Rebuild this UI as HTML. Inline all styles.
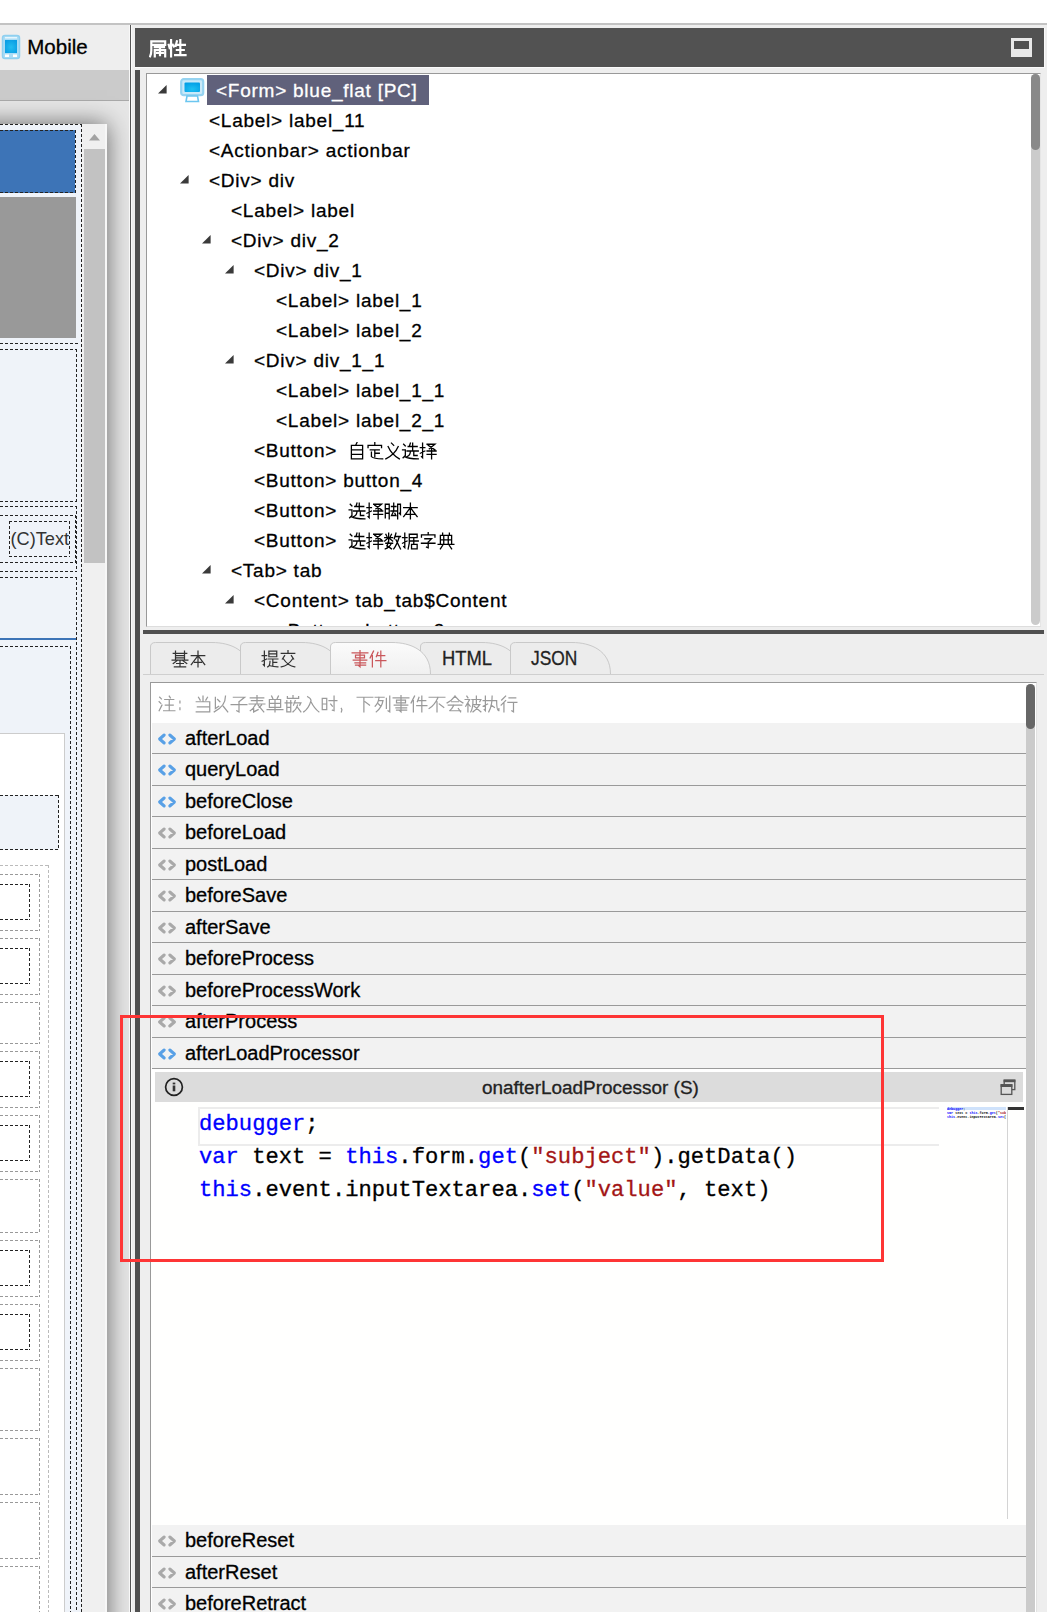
<!DOCTYPE html><html><head><meta charset="utf-8"><title>form designer</title><style>
*{margin:0;padding:0;box-sizing:border-box}
html,body{width:1047px;height:1612px;overflow:hidden;background:#fff}
body{position:relative;font-family:"Liberation Sans",sans-serif;color:#000}
.a{position:absolute}
.t{position:absolute;white-space:nowrap}
.cj{letter-spacing:3px}
.t{-webkit-text-stroke:0.3px currentColor}
</style></head><body>
<div class="a" style="left:0px;top:23px;width:1047px;height:2px;background:#c3c3c3"></div>
<div class="a" style="left:0;top:0;width:129px;height:1612px;overflow:hidden">
<div class="a" style="left:0px;top:25px;width:129px;height:45px;background:#eeeeee"></div>
<svg class="a" style="left:1px;top:34px" width="20" height="26" viewBox="0 0 20 26"><rect x="1.5" y="1.5" width="17" height="23" rx="2.5" fill="#aadcf5" stroke="#8fd0f0" stroke-width="1.5"/><defs><radialGradient id="mg" cx=".5" cy=".55" r=".6"><stop offset="0" stop-color="#22bdf0"/><stop offset="1" stop-color="#0a9ee4"/></radialGradient></defs><rect x="4" y="6" width="12" height="13" fill="url(#mg)"/><rect x="4" y="20.5" width="4" height="2.5" fill="#fff"/><rect x="12" y="20.5" width="4" height="2.5" fill="#fff"/><rect x="4" y="3" width="12" height="1.5" fill="#e6f6fd"/></svg>
<div class="t" style="left:27.3px;top:37px;font-size:20.5px;line-height:20px;color:#000">Mobile</div>
<div class="a" style="left:0px;top:70px;width:129px;height:30px;background:#cbcbcb"></div>
<div class="a" style="left:0px;top:100px;width:129px;height:1px;background:#a9a9a9"></div>
<div class="a" style="left:0px;top:101px;width:129px;height:1511px;background:#e6e6e6"></div>
<div class="a" style="left:-30px;top:124px;width:137px;height:1600px;background:#f0f0f0;box-shadow:0 0 23px rgba(0,0,0,.56)"></div>
<svg class="a" style="left:88px;top:133px" width="13" height="8"><path d="M1 7.5 L6.5 1 L12 7.5Z" fill="#a3a3a3"/></svg>
<div class="a" style="left:84px;top:149px;width:21px;height:414px;background:#c2c2c2"></div>
<div class="a" style="left:105px;top:124px;width:2px;height:1500px;background:#f7f7f7"></div>
<div class="a" style="left:-30px;top:125px;width:111px;height:1600px;background:#eff3f9"></div>
<div class="a" style="left:0px;top:124px;width:82px;height:1px;background:repeating-linear-gradient(90deg,#222 0 3px,transparent 3px 5px)"></div>
<div class="a" style="left:81px;top:124px;width:1px;height:1489px;background:repeating-linear-gradient(180deg,#222 0 3px,transparent 3px 5px)"></div>
<div class="a" style="left:-30px;top:130px;width:105px;height:63px;background:#3d74b7"></div>
<div class="a" style="left:-5px;top:130px;width:81px;height:1px;background:repeating-linear-gradient(90deg,#222 0 3px,transparent 3px 5px)"></div><div class="a" style="left:75px;top:130px;width:1px;height:63px;background:repeating-linear-gradient(180deg,#222 0 3px,transparent 3px 5px)"></div><div class="a" style="left:-5px;top:192px;width:81px;height:1px;background:repeating-linear-gradient(90deg,#222 0 3px,transparent 3px 5px)"></div>
<div class="a" style="left:-30px;top:197px;width:106px;height:141px;background:#999999"></div>
<div class="a" style="left:0px;top:343px;width:78px;height:1px;background:repeating-linear-gradient(90deg,#222 0 3px,transparent 3px 5px)"></div>
<div class="a" style="left:-5px;top:349px;width:82px;height:1px;background:repeating-linear-gradient(90deg,#222 0 3px,transparent 3px 5px)"></div><div class="a" style="left:76px;top:349px;width:1px;height:153px;background:repeating-linear-gradient(180deg,#222 0 3px,transparent 3px 5px)"></div><div class="a" style="left:-5px;top:501px;width:82px;height:1px;background:repeating-linear-gradient(90deg,#222 0 3px,transparent 3px 5px)"></div>
<div class="a" style="left:-5px;top:506px;width:82px;height:1px;background:repeating-linear-gradient(90deg,#222 0 3px,transparent 3px 5px)"></div><div class="a" style="left:76px;top:506px;width:1px;height:66px;background:repeating-linear-gradient(180deg,#222 0 3px,transparent 3px 5px)"></div><div class="a" style="left:-5px;top:571px;width:82px;height:1px;background:repeating-linear-gradient(90deg,#222 0 3px,transparent 3px 5px)"></div>
<div class="a" style="left:-5px;top:515px;width:81px;height:1px;background:repeating-linear-gradient(90deg,#222 0 3px,transparent 3px 5px)"></div><div class="a" style="left:75px;top:515px;width:1px;height:48px;background:repeating-linear-gradient(180deg,#222 0 3px,transparent 3px 5px)"></div><div class="a" style="left:-5px;top:562px;width:81px;height:1px;background:repeating-linear-gradient(90deg,#222 0 3px,transparent 3px 5px)"></div>
<div class="a" style="left:9px;top:521px;width:61px;height:1px;background:repeating-linear-gradient(90deg,#222 0 3px,transparent 3px 5px)"></div><div class="a" style="left:69px;top:521px;width:1px;height:36px;background:repeating-linear-gradient(180deg,#222 0 3px,transparent 3px 5px)"></div><div class="a" style="left:9px;top:556px;width:61px;height:1px;background:repeating-linear-gradient(90deg,#222 0 3px,transparent 3px 5px)"></div><div class="a" style="left:9px;top:521px;width:1px;height:36px;background:repeating-linear-gradient(180deg,#222 0 3px,transparent 3px 5px)"></div>
<div class="t" style="left:10.5px;top:529px;font-size:18.2px;line-height:20px;color:#333;-webkit-text-stroke:0">(C)Text</div>
<div class="a" style="left:0px;top:577px;width:77px;height:1px;background:repeating-linear-gradient(90deg,#222 0 3px,transparent 3px 5px)"></div>
<div class="a" style="left:76px;top:577px;width:1px;height:1036px;background:repeating-linear-gradient(180deg,#222 0 3px,transparent 3px 5px)"></div>
<div class="a" style="left:0px;top:638px;width:76px;height:2px;background:#3d74b7"></div>
<div class="a" style="left:0px;top:646px;width:71px;height:1px;background:repeating-linear-gradient(90deg,#222 0 3px,transparent 3px 5px)"></div>
<div class="a" style="left:70px;top:646px;width:1px;height:967px;background:repeating-linear-gradient(180deg,#222 0 3px,transparent 3px 5px)"></div>
<div class="a" style="left:-5px;top:733px;width:70px;height:1000px;background:#fff;border-top:1px solid #ccc;border-right:1px solid #ccc"></div>
<div class="a" style="left:-5px;top:795px;width:64px;height:55px;background:#eff3f9"></div>
<div class="a" style="left:-5px;top:795px;width:64px;height:1px;background:repeating-linear-gradient(90deg,#222 0 3px,transparent 3px 5px)"></div><div class="a" style="left:58px;top:795px;width:1px;height:55px;background:repeating-linear-gradient(180deg,#222 0 3px,transparent 3px 5px)"></div><div class="a" style="left:-5px;top:849px;width:64px;height:1px;background:repeating-linear-gradient(90deg,#222 0 3px,transparent 3px 5px)"></div>
<div class="a" style="left:0px;top:865px;width:49px;height:1px;background:repeating-linear-gradient(90deg,#bbb 0 3px,transparent 3px 5px)"></div>
<div class="a" style="left:48px;top:865px;width:1px;height:748px;background:repeating-linear-gradient(180deg,#bbb 0 3px,transparent 3px 5px)"></div>
<div class="a" style="left:-5px;top:874px;width:45px;height:1px;background:repeating-linear-gradient(90deg,#999 0 3px,transparent 3px 5px)"></div><div class="a" style="left:39px;top:874px;width:1px;height:57px;background:repeating-linear-gradient(180deg,#999 0 3px,transparent 3px 5px)"></div><div class="a" style="left:-5px;top:930px;width:45px;height:1px;background:repeating-linear-gradient(90deg,#999 0 3px,transparent 3px 5px)"></div>
<div class="a" style="left:-5px;top:938px;width:45px;height:1px;background:repeating-linear-gradient(90deg,#999 0 3px,transparent 3px 5px)"></div><div class="a" style="left:39px;top:938px;width:1px;height:57px;background:repeating-linear-gradient(180deg,#999 0 3px,transparent 3px 5px)"></div><div class="a" style="left:-5px;top:994px;width:45px;height:1px;background:repeating-linear-gradient(90deg,#999 0 3px,transparent 3px 5px)"></div>
<div class="a" style="left:-5px;top:1002px;width:45px;height:1px;background:repeating-linear-gradient(90deg,#999 0 3px,transparent 3px 5px)"></div><div class="a" style="left:39px;top:1002px;width:1px;height:42px;background:repeating-linear-gradient(180deg,#999 0 3px,transparent 3px 5px)"></div><div class="a" style="left:-5px;top:1043px;width:45px;height:1px;background:repeating-linear-gradient(90deg,#999 0 3px,transparent 3px 5px)"></div>
<div class="a" style="left:-5px;top:1051px;width:45px;height:1px;background:repeating-linear-gradient(90deg,#999 0 3px,transparent 3px 5px)"></div><div class="a" style="left:39px;top:1051px;width:1px;height:57px;background:repeating-linear-gradient(180deg,#999 0 3px,transparent 3px 5px)"></div><div class="a" style="left:-5px;top:1107px;width:45px;height:1px;background:repeating-linear-gradient(90deg,#999 0 3px,transparent 3px 5px)"></div>
<div class="a" style="left:-5px;top:1115px;width:45px;height:1px;background:repeating-linear-gradient(90deg,#999 0 3px,transparent 3px 5px)"></div><div class="a" style="left:39px;top:1115px;width:1px;height:57px;background:repeating-linear-gradient(180deg,#999 0 3px,transparent 3px 5px)"></div><div class="a" style="left:-5px;top:1171px;width:45px;height:1px;background:repeating-linear-gradient(90deg,#999 0 3px,transparent 3px 5px)"></div>
<div class="a" style="left:-5px;top:1179px;width:45px;height:1px;background:repeating-linear-gradient(90deg,#999 0 3px,transparent 3px 5px)"></div><div class="a" style="left:39px;top:1179px;width:1px;height:54px;background:repeating-linear-gradient(180deg,#999 0 3px,transparent 3px 5px)"></div><div class="a" style="left:-5px;top:1232px;width:45px;height:1px;background:repeating-linear-gradient(90deg,#999 0 3px,transparent 3px 5px)"></div>
<div class="a" style="left:-5px;top:1240px;width:45px;height:1px;background:repeating-linear-gradient(90deg,#999 0 3px,transparent 3px 5px)"></div><div class="a" style="left:39px;top:1240px;width:1px;height:57px;background:repeating-linear-gradient(180deg,#999 0 3px,transparent 3px 5px)"></div><div class="a" style="left:-5px;top:1296px;width:45px;height:1px;background:repeating-linear-gradient(90deg,#999 0 3px,transparent 3px 5px)"></div>
<div class="a" style="left:-5px;top:1304px;width:45px;height:1px;background:repeating-linear-gradient(90deg,#999 0 3px,transparent 3px 5px)"></div><div class="a" style="left:39px;top:1304px;width:1px;height:57px;background:repeating-linear-gradient(180deg,#999 0 3px,transparent 3px 5px)"></div><div class="a" style="left:-5px;top:1360px;width:45px;height:1px;background:repeating-linear-gradient(90deg,#999 0 3px,transparent 3px 5px)"></div>
<div class="a" style="left:-5px;top:1368px;width:45px;height:1px;background:repeating-linear-gradient(90deg,#999 0 3px,transparent 3px 5px)"></div><div class="a" style="left:39px;top:1368px;width:1px;height:63px;background:repeating-linear-gradient(180deg,#999 0 3px,transparent 3px 5px)"></div><div class="a" style="left:-5px;top:1430px;width:45px;height:1px;background:repeating-linear-gradient(90deg,#999 0 3px,transparent 3px 5px)"></div>
<div class="a" style="left:-5px;top:1438px;width:45px;height:1px;background:repeating-linear-gradient(90deg,#999 0 3px,transparent 3px 5px)"></div><div class="a" style="left:39px;top:1438px;width:1px;height:57px;background:repeating-linear-gradient(180deg,#999 0 3px,transparent 3px 5px)"></div><div class="a" style="left:-5px;top:1494px;width:45px;height:1px;background:repeating-linear-gradient(90deg,#999 0 3px,transparent 3px 5px)"></div>
<div class="a" style="left:-5px;top:1502px;width:45px;height:1px;background:repeating-linear-gradient(90deg,#999 0 3px,transparent 3px 5px)"></div><div class="a" style="left:39px;top:1502px;width:1px;height:57px;background:repeating-linear-gradient(180deg,#999 0 3px,transparent 3px 5px)"></div><div class="a" style="left:-5px;top:1558px;width:45px;height:1px;background:repeating-linear-gradient(90deg,#999 0 3px,transparent 3px 5px)"></div>
<div class="a" style="left:-5px;top:1566px;width:45px;height:1px;background:repeating-linear-gradient(90deg,#999 0 3px,transparent 3px 5px)"></div><div class="a" style="left:39px;top:1566px;width:1px;height:57px;background:repeating-linear-gradient(180deg,#999 0 3px,transparent 3px 5px)"></div><div class="a" style="left:-5px;top:1622px;width:45px;height:1px;background:repeating-linear-gradient(90deg,#999 0 3px,transparent 3px 5px)"></div>
<div class="a" style="left:-5px;top:884px;width:35px;height:1px;background:repeating-linear-gradient(90deg,#222 0 3px,transparent 3px 5px)"></div><div class="a" style="left:29px;top:884px;width:1px;height:36px;background:repeating-linear-gradient(180deg,#222 0 3px,transparent 3px 5px)"></div><div class="a" style="left:-5px;top:919px;width:35px;height:1px;background:repeating-linear-gradient(90deg,#222 0 3px,transparent 3px 5px)"></div>
<div class="a" style="left:-5px;top:948px;width:35px;height:1px;background:repeating-linear-gradient(90deg,#222 0 3px,transparent 3px 5px)"></div><div class="a" style="left:29px;top:948px;width:1px;height:36px;background:repeating-linear-gradient(180deg,#222 0 3px,transparent 3px 5px)"></div><div class="a" style="left:-5px;top:983px;width:35px;height:1px;background:repeating-linear-gradient(90deg,#222 0 3px,transparent 3px 5px)"></div>
<div class="a" style="left:-5px;top:1061px;width:35px;height:1px;background:repeating-linear-gradient(90deg,#222 0 3px,transparent 3px 5px)"></div><div class="a" style="left:29px;top:1061px;width:1px;height:36px;background:repeating-linear-gradient(180deg,#222 0 3px,transparent 3px 5px)"></div><div class="a" style="left:-5px;top:1096px;width:35px;height:1px;background:repeating-linear-gradient(90deg,#222 0 3px,transparent 3px 5px)"></div>
<div class="a" style="left:-5px;top:1125px;width:35px;height:1px;background:repeating-linear-gradient(90deg,#222 0 3px,transparent 3px 5px)"></div><div class="a" style="left:29px;top:1125px;width:1px;height:36px;background:repeating-linear-gradient(180deg,#222 0 3px,transparent 3px 5px)"></div><div class="a" style="left:-5px;top:1160px;width:35px;height:1px;background:repeating-linear-gradient(90deg,#222 0 3px,transparent 3px 5px)"></div>
<div class="a" style="left:-5px;top:1250px;width:35px;height:1px;background:repeating-linear-gradient(90deg,#222 0 3px,transparent 3px 5px)"></div><div class="a" style="left:29px;top:1250px;width:1px;height:36px;background:repeating-linear-gradient(180deg,#222 0 3px,transparent 3px 5px)"></div><div class="a" style="left:-5px;top:1285px;width:35px;height:1px;background:repeating-linear-gradient(90deg,#222 0 3px,transparent 3px 5px)"></div>
<div class="a" style="left:-5px;top:1314px;width:35px;height:1px;background:repeating-linear-gradient(90deg,#222 0 3px,transparent 3px 5px)"></div><div class="a" style="left:29px;top:1314px;width:1px;height:36px;background:repeating-linear-gradient(180deg,#222 0 3px,transparent 3px 5px)"></div><div class="a" style="left:-5px;top:1349px;width:35px;height:1px;background:repeating-linear-gradient(90deg,#222 0 3px,transparent 3px 5px)"></div>
</div>
<div class="a" style="left:129px;top:25px;width:1px;height:1587px;background:#f8f8f8"></div>
<div class="a" style="left:130px;top:25px;width:1px;height:1587px;background:#555"></div>
<div class="a" style="left:131px;top:25px;width:916px;height:1587px;background:#eeeeee"></div>
<div class="a" style="left:131px;top:25px;width:1px;height:1587px;background:#fafafa"></div>
<div class="a" style="left:135px;top:28px;width:910px;height:40px;background:#fafafa"></div>
<div class="a" style="left:135px;top:28px;width:909px;height:39px;background:#525252"></div>
<svg class="a" style="left:149px;top:38.5px" width="39" height="20" viewBox="0 0 33.730 17.297"><g fill="none" stroke="#fff" stroke-width="1.9" stroke-linecap="square" stroke-linejoin="miter"><path transform="translate(0.00 0)" d="M2 2H14V5H2 M2 2V10Q2 13 1 15 M5 7H13 M5 9.5H14V15 M5 9.5V15 M9.5 7V14 M7 12H12"/><path transform="translate(16.09 0)" d="M3 1V15 M1 5L1.8 8 M4.5 5L5.5 6.5 M8 2L7 6 M7 5H15 M11 1V14 M8 9.5H14 M6.5 14H15.5"/></g></svg>
<svg class="a" style="left:1011px;top:38px" width="21" height="19"><rect x="0" y="0" width="21" height="19" fill="#e8e8e8"/><rect x="3" y="3" width="15" height="8" fill="#505050"/></svg>
<div class="a" style="left:135px;top:70px;width:5px;height:1542px;background:#505050"></div>
<div class="a" style="left:146px;top:73px;width:895px;height:554px;background:#fff;border-top:1px solid #999;border-left:1px solid #999;border-bottom:1px solid #ddd;border-right:1px solid #e6e6e6;overflow:hidden">
<svg class="a" style="left:11px;top:11px" width="10" height="10"><path d="M0 8.6 L8.6 0 L8.6 8.6Z" fill="#3a3a3a"/></svg>
<div class="a" style="left:60px;top:1px;width:222px;height:30px;background:#60617b"></div>
<svg class="a" style="left:33px;top:4px" width="25" height="25" viewBox="0 0 25 25"><rect x="1.2" y="1.2" width="22" height="16" rx="2.5" fill="#c9e9f9" stroke="#95d3f1" stroke-width="2.2"/><defs><radialGradient id="sg" cx=".5" cy=".7" r=".7"><stop offset="0" stop-color="#1ec0f2"/><stop offset="1" stop-color="#02a0e6"/></radialGradient></defs><rect x="4.5" y="4.5" width="15.5" height="9.5" rx="1" fill="url(#sg)"/><path d="M7 18 L17.5 18 L18.5 23.5 L6 23.5Z" fill="#fff" stroke="#6cc6f0" stroke-width="1.6"/></svg>
<div class="t" style="left:69px;top:2px;font-size:19px;line-height:30px;letter-spacing:0.75px;color:#fff">&lt;Form&gt; blue_flat [PC]</div>
<div class="t" style="left:62px;top:32px;font-size:19px;line-height:30px;letter-spacing:0.75px;color:#000">&lt;Label&gt; label_11</div>
<div class="t" style="left:62px;top:62px;font-size:19px;line-height:30px;letter-spacing:0.75px;color:#000">&lt;Actionbar&gt; actionbar</div>
<svg class="a" style="left:33px;top:101px" width="10" height="10"><path d="M0 8.6 L8.6 0 L8.6 8.6Z" fill="#3a3a3a"/></svg>
<div class="t" style="left:62px;top:92px;font-size:19px;line-height:30px;letter-spacing:0.75px;color:#000">&lt;Div&gt; div</div>
<div class="t" style="left:84px;top:122px;font-size:19px;line-height:30px;letter-spacing:0.75px;color:#000">&lt;Label&gt; label</div>
<svg class="a" style="left:55px;top:161px" width="10" height="10"><path d="M0 8.6 L8.6 0 L8.6 8.6Z" fill="#3a3a3a"/></svg>
<div class="t" style="left:84px;top:152px;font-size:19px;line-height:30px;letter-spacing:0.75px;color:#000">&lt;Div&gt; div_2</div>
<svg class="a" style="left:78px;top:191px" width="10" height="10"><path d="M0 8.6 L8.6 0 L8.6 8.6Z" fill="#3a3a3a"/></svg>
<div class="t" style="left:107px;top:182px;font-size:19px;line-height:30px;letter-spacing:0.75px;color:#000">&lt;Div&gt; div_1</div>
<div class="t" style="left:129px;top:212px;font-size:19px;line-height:30px;letter-spacing:0.75px;color:#000">&lt;Label&gt; label_1</div>
<div class="t" style="left:129px;top:242px;font-size:19px;line-height:30px;letter-spacing:0.75px;color:#000">&lt;Label&gt; label_2</div>
<svg class="a" style="left:78px;top:281px" width="10" height="10"><path d="M0 8.6 L8.6 0 L8.6 8.6Z" fill="#3a3a3a"/></svg>
<div class="t" style="left:107px;top:272px;font-size:19px;line-height:30px;letter-spacing:0.75px;color:#000">&lt;Div&gt; div_1_1</div>
<div class="t" style="left:129px;top:302px;font-size:19px;line-height:30px;letter-spacing:0.75px;color:#000">&lt;Label&gt; label_1_1</div>
<div class="t" style="left:129px;top:332px;font-size:19px;line-height:30px;letter-spacing:0.75px;color:#000">&lt;Label&gt; label_2_1</div>
<div class="t" style="left:107px;top:362px;font-size:19px;line-height:30px;letter-spacing:0.75px;color:#000">&lt;Button&gt; </div>
<div class="t" style="left:107px;top:392px;font-size:19px;line-height:30px;letter-spacing:0.75px;color:#000">&lt;Button&gt; button_4</div>
<div class="t" style="left:107px;top:422px;font-size:19px;line-height:30px;letter-spacing:0.75px;color:#000">&lt;Button&gt; </div>
<div class="t" style="left:107px;top:452px;font-size:19px;line-height:30px;letter-spacing:0.75px;color:#000">&lt;Button&gt; </div>
<svg class="a" style="left:55px;top:491px" width="10" height="10"><path d="M0 8.6 L8.6 0 L8.6 8.6Z" fill="#3a3a3a"/></svg>
<div class="t" style="left:84px;top:482px;font-size:19px;line-height:30px;letter-spacing:0.75px;color:#000">&lt;Tab&gt; tab</div>
<svg class="a" style="left:78px;top:521px" width="10" height="10"><path d="M0 8.6 L8.6 0 L8.6 8.6Z" fill="#3a3a3a"/></svg>
<div class="t" style="left:107px;top:512px;font-size:19px;line-height:30px;letter-spacing:0.75px;color:#000">&lt;Content&gt; tab_tab$Content</div>
<div class="t" style="left:129px;top:542px;font-size:19px;line-height:30px;letter-spacing:0.75px;color:#000">&lt;Button&gt; button_3</div>
</div>
<svg class="a" style="left:348px;top:441.5px" width="91" height="20" viewBox="0 0 80.889 17.778"><g fill="none" stroke="#000" stroke-width="1.15" stroke-linecap="square" stroke-linejoin="miter"><path transform="translate(0.00 0)" d="M8 0.5L7 2.5 M3 3H13V15H3Z M3 7H13 M3 11H13"/><path transform="translate(15.82 0)" d="M8 0.5V2.5 M2 5V3H14V5 M4 7H12 M8 7V13 M8 10H12 M5 9V13Q7 15 15 15"/><path transform="translate(31.64 0)" d="M7 1L9 3 M4 4Q7 11 14 15 M13 4Q10 11 2 15"/><path transform="translate(47.47 0)" d="M2 2L3.5 3.5 M1 7H3.5V12L1.5 14 M3 13Q6 15 15 15 M8 1L7 4 M6 4H14 M10 1V8 M5 8H15 M8 8Q8 12 5 13 M11 8V12H14"/><path transform="translate(63.29 0)" d="M1 5H5 M3 1V14L2 13 M1 10L5 8 M7 2H14L9 6 M8 3L14 7 M7 8H15 M11 6V15 M7 11H15"/></g></svg>
<svg class="a" style="left:348px;top:501.5px" width="73" height="20" viewBox="0 0 64.889 17.778"><g fill="none" stroke="#000" stroke-width="1.15" stroke-linecap="square" stroke-linejoin="miter"><path transform="translate(0.00 0)" d="M2 2L3.5 3.5 M1 7H3.5V12L1.5 14 M3 13Q6 15 15 15 M8 1L7 4 M6 4H14 M10 1V8 M5 8H15 M8 8Q8 12 5 13 M11 8V12H14"/><path transform="translate(15.82 0)" d="M1 5H5 M3 1V14L2 13 M1 10L5 8 M7 2H14L9 6 M8 3L14 7 M7 8H15 M11 6V15 M7 11H15"/><path transform="translate(31.64 0)" d="M1.5 2V14 M1.5 2H5V15 M1.5 6H5 M1.5 10H5 M7 4H11 M9 1V8 M6.5 8H11.5 M9 8L7 12H11L10 10 M12.5 2H15V11L14 10 M12.5 2V15"/><path transform="translate(47.47 0)" d="M2 5H14 M8 1V15 M8 5L2 13 M8 5L14 13 M5 11H11"/></g></svg>
<svg class="a" style="left:348px;top:531.5px" width="108" height="20" viewBox="0 0 96.000 17.778"><g fill="none" stroke="#000" stroke-width="1.15" stroke-linecap="square" stroke-linejoin="miter"><path transform="translate(0.00 0)" d="M2 2L3.5 3.5 M1 7H3.5V12L1.5 14 M3 13Q6 15 15 15 M8 1L7 4 M6 4H14 M10 1V8 M5 8H15 M8 8Q8 12 5 13 M11 8V12H14"/><path transform="translate(15.82 0)" d="M1 5H5 M3 1V14L2 13 M1 10L5 8 M7 2H14L9 6 M8 3L14 7 M7 8H15 M11 6V15 M7 11H15"/><path transform="translate(31.64 0)" d="M2 2L3 4 M7 2L6 4 M1 5H8 M4.5 1V9 M4.5 5L1 8 M4.5 5L8 8 M2 10H8 M4 9L3 13 M7 10Q5 14 1.5 15 M3 12L7 15 M11 1L9.5 6 M10 4H15 M14 4Q12 11 9 15 M11 7L15 15"/><path transform="translate(47.47 0)" d="M1 5H5 M3 1V14L2 13 M1 10L5 8 M7 2H14V5H7 M7 2V10L6 15 M8 8H15 M11 6V11 M9 11H14V15H9Z"/><path transform="translate(63.29 0)" d="M8 0.5V2 M2 4.5V2.5H14V4.5 M5 6H11L8 9 M2 10H14 M8 9V14L6.5 13.5"/><path transform="translate(79.11 0)" d="M5 1V3 M11 1V3 M3 3H13V11H3Z M3 7H13 M6 3V11 M10 3V11 M1 11H15 M5 12L3 15 M11 12L13 15"/></g></svg>
<div class="a" style="left:147px;top:74px;width:893px;height:552px;overflow:hidden">
<div class="a" style="left:884px;top:0px;width:9px;height:551px;background:#cbcbcb;border-radius:4.5px"></div>
<div class="a" style="left:884px;top:0px;width:9px;height:76px;background:#898989;border-radius:4.5px"></div>
</div>
<div class="a" style="left:143px;top:630px;width:901px;height:4px;background:#505050"></div>
<svg class="a" style="left:140px;top:638px" width="500" height="40"><path d="M10.5 36 L10.5 9 Q10.5 4.5 15.5 4.5 L72 4.5 C90 4.5 110.5 12 110.5 36" fill="#ececec" stroke="#c9c9c9" stroke-width="1"/><path d="M100.5 36 L100.5 9 Q100.5 4.5 105.5 4.5 L162 4.5 C180 4.5 200.5 12 200.5 36" fill="#ececec" stroke="#c9c9c9" stroke-width="1"/><path d="M280.5 36 L280.5 9 Q280.5 4.5 285.5 4.5 L342 4.5 C360 4.5 380.5 12 380.5 36" fill="#ececec" stroke="#c9c9c9" stroke-width="1"/><path d="M370.5 36 L370.5 9 Q370.5 4.5 375.5 4.5 L432 4.5 C450 4.5 470.5 12 470.5 36" fill="#ececec" stroke="#c9c9c9" stroke-width="1"/><defs><linearGradient id="ag" x1="0" y1="0" x2="0" y2="1"><stop offset="0" stop-color="#fbfbfb"/><stop offset="1" stop-color="#f0f0f0"/></linearGradient></defs><path d="M190.5 36 L190.5 9 Q190.5 4.5 195.5 4.5 L252 4.5 C270 4.5 290.5 12 290.5 36" fill="url(#ag)" stroke="#c9c9c9" stroke-width="1"/></svg>
<div class="a" style="left:143px;top:674px;width:901px;height:1px;background:#cfcfcf"></div>
<svg class="a" style="left:171px;top:649.5px" width="38" height="20" viewBox="0 0 33.778 17.778"><g fill="none" stroke="#333" stroke-width="1.1" stroke-linecap="square" stroke-linejoin="miter"><path transform="translate(0.00 0)" d="M4 1V8 M12 1V8 M2 3H14 M4 5H12 M4 7H12 M1 9H15 M6 9L2 12 M10 9L14 12 M8 10V15 M5 12H11 M3 15H13"/><path transform="translate(16.00 0)" d="M2 5H14 M8 1V15 M8 5L2 13 M8 5L14 13 M5 11H11"/></g></svg>
<svg class="a" style="left:261px;top:649.5px" width="38" height="20" viewBox="0 0 33.778 17.778"><g fill="none" stroke="#333" stroke-width="1.1" stroke-linecap="square" stroke-linejoin="miter"><path transform="translate(0.00 0)" d="M1 5H5 M3 1V14L2 13 M1 10L5 8 M7 1H14V6H7Z M7 3.5H14 M6.5 8H15 M10.5 8V14 M10.5 11H14 M8 10Q8 14 6 15 M8 14Q11 15 15 15"/><path transform="translate(16.00 0)" d="M8 0.5V2 M2 3H14 M5 5L3 8 M11 5L13 8 M4 8Q8 14 14 15 M12 8Q8 14 2 15"/></g></svg>
<svg class="a" style="left:351px;top:649.5px" width="38" height="20" viewBox="0 0 33.778 17.778"><g fill="none" stroke="#c9575b" stroke-width="1.1" stroke-linecap="square" stroke-linejoin="miter"><path transform="translate(0.00 0)" d="M1 2.5H15 M8 0.5V15L7 14 M4 4.5H12V7H4Z M2 9H14 M3.5 11.5H13 M4 13.5H13"/><path transform="translate(16.00 0)" d="M4 1L1 7 M3 5V15 M8 2L6.5 6 M7 5H14 M10.5 1V15 M6 9.5H15"/></g></svg>
<div class="t" style="left:442px;top:648px;font-size:19.75px;line-height:20px;transform:scaleX(0.93);transform-origin:0 0;color:#222">HTML</div>
<div class="t" style="left:531px;top:648px;font-size:19.75px;line-height:20px;transform:scaleX(0.88);transform-origin:0 0;color:#222">JSON</div>
<div class="a" style="left:150px;top:682px;width:887px;height:940px;background:#fff;border-top:1px solid #999;border-left:1px solid #999;border-right:1px solid #e2e2e2"></div>
<svg class="a" style="left:158px;top:694.5px" width="362" height="20" viewBox="0 0 321.778 17.778"><g fill="none" stroke="#9a9a9a" stroke-width="1.1" stroke-linecap="square" stroke-linejoin="miter"><path transform="translate(0.00 0)" d="M1.5 2L3 3.5 M1 6L2.5 7.5 M1 14L3.5 9 M10 1L11 2.5 M6 4H14 M10 4V14 M6.5 9H13.5 M5 14H15"/><path transform="translate(16.00 0)" d="M3.5 5.5V7 M3.5 11.5V13"/><path transform="translate(32.00 0)" d="M8 1V5 M4 2L5.5 4.5 M12 2L10.5 4.5 M2 6H14V15 M3 10.5H14 M2 15H14"/><path transform="translate(48.00 0)" d="M3 2V12L6 10 M5 4L7 6 M12 1Q12 10 2 15 M10 10L14 15"/><path transform="translate(64.00 0)" d="M3 2H13L8 6 M8 6V15L6 14 M1 8.5H15"/><path transform="translate(80.00 0)" d="M2 2.5H14 M3 5H13 M1 8H15 M8 0.5V8 M7 8Q5 12 2 14 M5 11V15L9 13 M9 9L14 15 M12 9L10 11"/><path transform="translate(96.00 0)" d="M5 1L6 3 M11 1L10 3 M3 4H13V11H3Z M3 7.5H13 M8 4V15 M1 13H15"/><path transform="translate(112.00 0)" d="M8 0.5V3 M3 1.5V3H13V1.5 M1 7H7 M2.5 5V15H6V5 M2.5 11H6 M10 5L8.5 9 M9 7H15L14 9 M12 9Q11 13 8 15 M12 11L15 15"/><path transform="translate(128.00 0)" d="M5 1.5Q8 3 8 5Q6 12 1.5 15 M8 6Q11 12 15 15"/><path transform="translate(144.00 0)" d="M2 3H6V13H2Z M2 8H6 M8 5H15 M12.5 1V14L11 13.5 M9.5 8L11 10"/><path transform="translate(160.00 0)" d="M3 12Q4 13 3 15"/><path transform="translate(176.00 0)" d="M1 2H15 M7 2V15 M8 6L12 9"/><path transform="translate(192.00 0)" d="M1 2H9 M4.5 2Q4 7 1 10 M4 5H8Q7 11 2 15 M4 8L6 10 M11 3V12 M14 1V15L12.5 14"/><path transform="translate(208.00 0)" d="M1 2.5H15 M8 0.5V15L7 14 M4 4.5H12V7H4Z M2 9H14 M3.5 11.5H13 M4 13.5H13"/><path transform="translate(224.00 0)" d="M4 1L1 7 M3 5V15 M8 2L6.5 6 M7 5H14 M10.5 1V15 M6 9.5H15"/><path transform="translate(240.00 0)" d="M1 2H15 M9 2Q6 9 1 12 M8 6V15 M10 8L14 11"/><path transform="translate(256.00 0)" d="M8 1Q5 5 1 7 M8 1Q11 5 15 7 M5 6H11 M2 9H14 M7 9Q5 13 3 14H13 M11 12L13 15"/><path transform="translate(272.00 0)" d="M2.5 1L3.5 2.5 M1 4H5L1.5 10 M3.5 7V15 M4 8L5.5 10 M7 4H15L14 6 M8 4Q8 12 6 15 M11 1V8 M8 8.5H14Q11 13 8 15 M9 10L15 15"/><path transform="translate(288.00 0)" d="M1 5H5 M3 1V14L2 13 M1 10L5 8 M6 5H13Q13 14 15 14V12 M9 1Q9 10 6 15 M8 9L11 11"/><path transform="translate(304.00 0)" d="M5 1L1.5 4.5 M5 5L1 9 M3.5 7.5V15 M8 2.5H14 M7 6.5H15 M12 6.5V15L10.5 14"/></g></svg>
<div class="a" style="left:152px;top:723px;width:874px;height:31px;background:#f2f2f2;border-bottom:1px solid #9a9a9a"></div>
<svg class="a" style="left:154px;top:730.5px" width="26" height="16"><path d="M10.2 4 L5.6 8 L10.2 12 M15.8 4 L20.4 8 L15.8 12" fill="none" stroke="#58a0e6" stroke-width="3" stroke-linecap="round" stroke-linejoin="round"/></svg>
<div class="t" style="left:185px;top:723px;font-size:20px;line-height:30px;color:#000">afterLoad</div>
<div class="a" style="left:152px;top:754px;width:874px;height:32px;background:#f2f2f2;border-bottom:1px solid #9a9a9a"></div>
<svg class="a" style="left:154px;top:762.0px" width="26" height="16"><path d="M10.2 4 L5.6 8 L10.2 12 M15.8 4 L20.4 8 L15.8 12" fill="none" stroke="#58a0e6" stroke-width="3" stroke-linecap="round" stroke-linejoin="round"/></svg>
<div class="t" style="left:185px;top:754px;font-size:20px;line-height:31px;color:#000">queryLoad</div>
<div class="a" style="left:152px;top:786px;width:874px;height:31px;background:#f2f2f2;border-bottom:1px solid #9a9a9a"></div>
<svg class="a" style="left:154px;top:793.5px" width="26" height="16"><path d="M10.2 4 L5.6 8 L10.2 12 M15.8 4 L20.4 8 L15.8 12" fill="none" stroke="#58a0e6" stroke-width="3" stroke-linecap="round" stroke-linejoin="round"/></svg>
<div class="t" style="left:185px;top:786px;font-size:20px;line-height:30px;color:#000">beforeClose</div>
<div class="a" style="left:152px;top:817px;width:874px;height:32px;background:#f2f2f2;border-bottom:1px solid #9a9a9a"></div>
<svg class="a" style="left:154px;top:825.0px" width="26" height="16"><path d="M10.2 4 L5.6 8 L10.2 12 M15.8 4 L20.4 8 L15.8 12" fill="none" stroke="#a9a9a9" stroke-width="3" stroke-linecap="round" stroke-linejoin="round"/></svg>
<div class="t" style="left:185px;top:817px;font-size:20px;line-height:31px;color:#000">beforeLoad</div>
<div class="a" style="left:152px;top:849px;width:874px;height:31px;background:#f2f2f2;border-bottom:1px solid #9a9a9a"></div>
<svg class="a" style="left:154px;top:856.5px" width="26" height="16"><path d="M10.2 4 L5.6 8 L10.2 12 M15.8 4 L20.4 8 L15.8 12" fill="none" stroke="#a9a9a9" stroke-width="3" stroke-linecap="round" stroke-linejoin="round"/></svg>
<div class="t" style="left:185px;top:849px;font-size:20px;line-height:30px;color:#000">postLoad</div>
<div class="a" style="left:152px;top:880px;width:874px;height:32px;background:#f2f2f2;border-bottom:1px solid #9a9a9a"></div>
<svg class="a" style="left:154px;top:888.0px" width="26" height="16"><path d="M10.2 4 L5.6 8 L10.2 12 M15.8 4 L20.4 8 L15.8 12" fill="none" stroke="#a9a9a9" stroke-width="3" stroke-linecap="round" stroke-linejoin="round"/></svg>
<div class="t" style="left:185px;top:880px;font-size:20px;line-height:31px;color:#000">beforeSave</div>
<div class="a" style="left:152px;top:912px;width:874px;height:31px;background:#f2f2f2;border-bottom:1px solid #9a9a9a"></div>
<svg class="a" style="left:154px;top:919.5px" width="26" height="16"><path d="M10.2 4 L5.6 8 L10.2 12 M15.8 4 L20.4 8 L15.8 12" fill="none" stroke="#a9a9a9" stroke-width="3" stroke-linecap="round" stroke-linejoin="round"/></svg>
<div class="t" style="left:185px;top:912px;font-size:20px;line-height:30px;color:#000">afterSave</div>
<div class="a" style="left:152px;top:943px;width:874px;height:32px;background:#f2f2f2;border-bottom:1px solid #9a9a9a"></div>
<svg class="a" style="left:154px;top:951.0px" width="26" height="16"><path d="M10.2 4 L5.6 8 L10.2 12 M15.8 4 L20.4 8 L15.8 12" fill="none" stroke="#a9a9a9" stroke-width="3" stroke-linecap="round" stroke-linejoin="round"/></svg>
<div class="t" style="left:185px;top:943px;font-size:20px;line-height:31px;color:#000">beforeProcess</div>
<div class="a" style="left:152px;top:975px;width:874px;height:31px;background:#f2f2f2;border-bottom:1px solid #9a9a9a"></div>
<svg class="a" style="left:154px;top:982.5px" width="26" height="16"><path d="M10.2 4 L5.6 8 L10.2 12 M15.8 4 L20.4 8 L15.8 12" fill="none" stroke="#a9a9a9" stroke-width="3" stroke-linecap="round" stroke-linejoin="round"/></svg>
<div class="t" style="left:185px;top:975px;font-size:20px;line-height:30px;color:#000">beforeProcessWork</div>
<div class="a" style="left:152px;top:1006px;width:874px;height:32px;background:#f2f2f2;border-bottom:1px solid #9a9a9a"></div>
<svg class="a" style="left:154px;top:1014.0px" width="26" height="16"><path d="M10.2 4 L5.6 8 L10.2 12 M15.8 4 L20.4 8 L15.8 12" fill="none" stroke="#a9a9a9" stroke-width="3" stroke-linecap="round" stroke-linejoin="round"/></svg>
<div class="t" style="left:185px;top:1006px;font-size:20px;line-height:31px;color:#000">afterProcess</div>
<div class="a" style="left:152px;top:1038px;width:874px;height:31px;background:#f2f2f2;border-bottom:1px solid #9a9a9a"></div>
<svg class="a" style="left:154px;top:1045.5px" width="26" height="16"><path d="M10.2 4 L5.6 8 L10.2 12 M15.8 4 L20.4 8 L15.8 12" fill="none" stroke="#58a0e6" stroke-width="3" stroke-linecap="round" stroke-linejoin="round"/></svg>
<div class="t" style="left:185px;top:1038px;font-size:20px;line-height:30px;color:#000">afterLoadProcessor</div>
<div class="a" style="left:152px;top:1525px;width:874px;height:32px;background:#f2f2f2;border-bottom:1px solid #9a9a9a"></div>
<svg class="a" style="left:154px;top:1533.0px" width="26" height="16"><path d="M10.2 4 L5.6 8 L10.2 12 M15.8 4 L20.4 8 L15.8 12" fill="none" stroke="#a9a9a9" stroke-width="3" stroke-linecap="round" stroke-linejoin="round"/></svg>
<div class="t" style="left:185px;top:1525px;font-size:20px;line-height:31px;color:#000">beforeReset</div>
<div class="a" style="left:152px;top:1557px;width:874px;height:31px;background:#f2f2f2;border-bottom:1px solid #9a9a9a"></div>
<svg class="a" style="left:154px;top:1564.5px" width="26" height="16"><path d="M10.2 4 L5.6 8 L10.2 12 M15.8 4 L20.4 8 L15.8 12" fill="none" stroke="#a9a9a9" stroke-width="3" stroke-linecap="round" stroke-linejoin="round"/></svg>
<div class="t" style="left:185px;top:1557px;font-size:20px;line-height:30px;color:#000">afterReset</div>
<div class="a" style="left:152px;top:1588px;width:874px;height:32px;background:#f2f2f2;border-bottom:1px solid #9a9a9a"></div>
<svg class="a" style="left:154px;top:1596.0px" width="26" height="16"><path d="M10.2 4 L5.6 8 L10.2 12 M15.8 4 L20.4 8 L15.8 12" fill="none" stroke="#a9a9a9" stroke-width="3" stroke-linecap="round" stroke-linejoin="round"/></svg>
<div class="t" style="left:185px;top:1588px;font-size:20px;line-height:31px;color:#000">beforeRetract</div>
<div class="a" style="left:1026px;top:684px;width:9px;height:940px;background:#cbcbcb;border-radius:4.5px"></div>
<div class="a" style="left:1026px;top:684px;width:9px;height:45px;background:#676767;border-radius:4.5px"></div>
<div class="a" style="left:1035px;top:683px;width:1px;height:929px;background:#fff"></div>
<div class="a" style="left:155px;top:1072px;width:868px;height:30px;background:#dcdcdc"></div>
<svg class="a" style="left:163px;top:1076px" width="22" height="22"><circle cx="11" cy="11" r="8.4" fill="none" stroke="#222" stroke-width="1.7"/><rect x="9.7" y="6.6" width="2.6" height="1.8" fill="#333"/><rect x="9.7" y="9.5" width="2.6" height="5.8" fill="#333"/></svg>
<div class="t" style="left:482px;top:1077px;font-size:18px;transform:scaleX(1.052);transform-origin:0 0;line-height:22px;color:#222">onafterLoadProcessor (S)</div>
<svg class="a" style="left:999px;top:1078px" width="18" height="18"><rect x="5.2" y="2.2" width="10.6" height="9.4" fill="#dcdcdc" stroke="#555" stroke-width="1.3"/><rect x="4.6" y="1.6" width="11.8" height="2.6" fill="#555"/><rect x="2.2" y="6.8" width="10.6" height="9.6" fill="#dcdcdc" stroke="#555" stroke-width="1.3"/><rect x="1.6" y="6.2" width="11.8" height="2.8" fill="#555"/></svg>
<div class="a" style="left:151px;top:1102px;width:875px;height:423px;background:#fffffe"></div>
<div class="a" style="left:198px;top:1107px;width:741px;height:39px;border:2px solid #ececec;border-right:none"></div>
<div class="t" style="left:199px;top:1110.8px;font-family:'Liberation Mono',monospace;font-size:21.8px;line-height:27px;transform:scaleX(1.016);transform-origin:0 0;color:#000"><span style="color:#0000ff">debugger</span>;</div>
<div class="t" style="left:199px;top:1144px;font-family:'Liberation Mono',monospace;font-size:21.8px;line-height:27px;transform:scaleX(1.016);transform-origin:0 0;color:#000"><span style="color:#0000ff">var</span> text = <span style="color:#0000ff">this</span>.form.<span style="color:#0000ff">get</span>(<span style="color:#a31515">"subject"</span>).getData()</div>
<div class="t" style="left:199px;top:1176.8px;font-family:'Liberation Mono',monospace;font-size:21.8px;line-height:27px;transform:scaleX(1.016);transform-origin:0 0;color:#000"><span style="color:#0000ff">this</span>.event.inputTextarea.<span style="color:#0000ff">set</span>(<span style="color:#a31515">"value"</span>, text)</div>
<div class="a" style="left:947px;top:1107px;width:59px;height:3px;background:#cfe2fb"></div>
<div class="a" style="left:947px;top:1106.5px;width:59px;height:14px;overflow:hidden;font-family:'Liberation Mono',monospace;font-size:3.4px;line-height:4px;white-space:pre;font-weight:bold"><span style="color:#0000ff">debugger</span>;<br><span style="color:#0000ff">var</span> text = <span style="color:#0000ff">this</span>.form.<span style="color:#0000ff">get</span>(<span style="color:#a31515">"subject"</span>).getData()<br><span style="color:#0000ff">this</span>.event.inputTextarea.<span style="color:#0000ff">set</span>(<span style="color:#a31515">"value"</span>, text)</div>
<div class="a" style="left:1007px;top:1107px;width:1px;height:412px;background:#d4d4d4"></div>
<div class="a" style="left:1008px;top:1107px;width:16px;height:3px;background:#333"></div>
<div class="a" style="left:120px;top:1015px;width:764px;height:247px;border:3px solid #fe3535"></div>
</body></html>
